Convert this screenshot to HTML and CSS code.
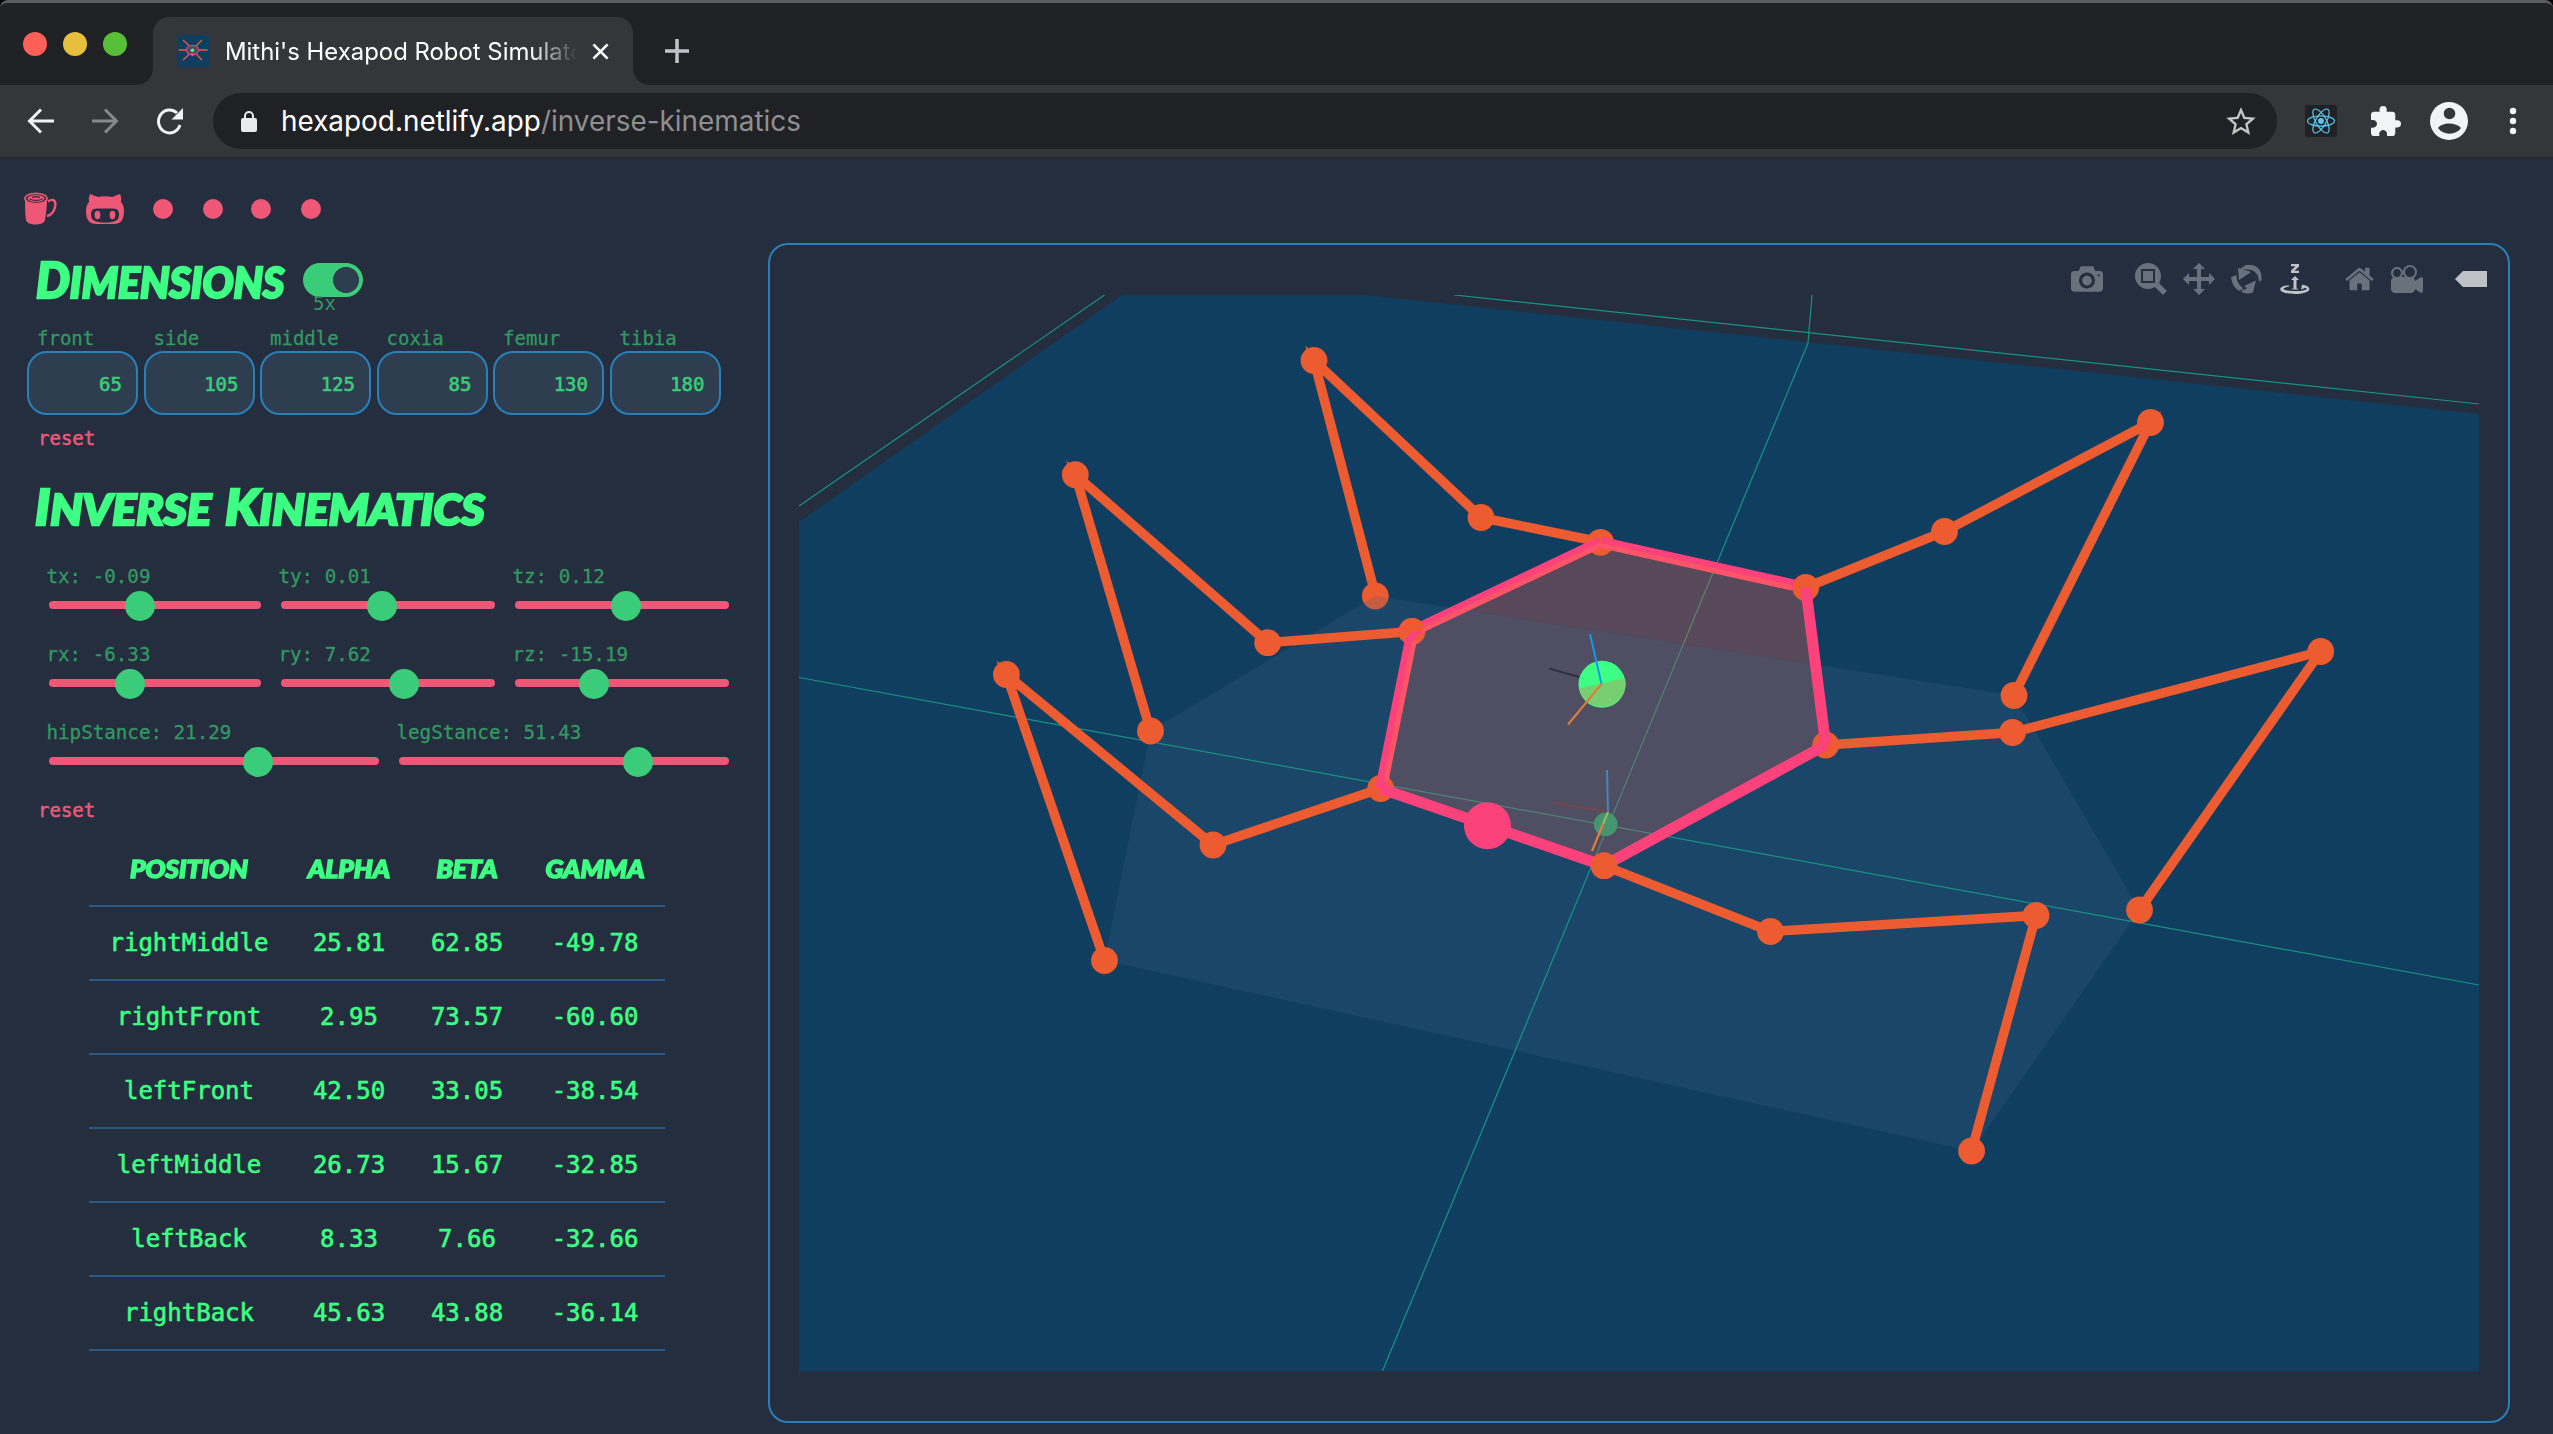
FILE: index.html
```html
<!DOCTYPE html>
<html lang="en">
<head>
<meta charset="utf-8">
<title>Mithi's Hexapod Robot Simulator</title>
<link rel="stylesheet" href="styles.css">
</head>
<body>
<header class="tabstrip">
  <div class="lights"><i class="red"></i><i class="yellow"></i><i class="green"></i></div>
  <div class="tab">
    <svg class="favicon" viewBox="0 0 32 32"><rect width="32" height="32" fill="#0f3e61"/><path d="M6 5l6 5.500M25 5l-5.500 5.500M1.500 15H9M22 15h8.500M6 25l6-5.500M25 25l-5.500-5.500" fill="none" stroke="#ed5b30" stroke-width="1.300"/><path d="M11.500 10.500h8l2.500 4.500-2.500 4.300h-8L9 15z" fill="#4f4d60" stroke="#e0447b" stroke-width="1.200"/><circle cx="15.400" cy="15.300" r="1.700" fill="#3dff83"/><circle cx="15.400" cy="19.600" r="1.600" fill="#fc427b"/></svg>
    <span class="tab-title">Mithi's Hexapod Robot Simulato</span>
    <svg class="close" viewBox="0 0 18 18"><path d="M1.500 1.500l15 15M16.500 1.500l-15 15"/></svg>
  </div>
  <svg class="plus" viewBox="0 0 24 24"><path d="M12 0v24M0 12h24"/></svg>
</header>
<nav class="toolbar">
  <svg class="nav" viewBox="0 0 26 26"><path d="M26 13H2M13 1.500L1.500 13 13 24.500"/></svg>
  <svg class="nav dim" viewBox="0 0 26 26"><path d="M0 13h24M13 1.500L24.500 13 13 24.500"/></svg>
  <svg class="nav" viewBox="0 0 26 26"><path d="M23.500 17A11 11.500 0 1 1 20.500 5"/><path class="solid" d="M26.500 0v11.500H15z"/></svg>
  <div class="urlbar">
    <svg class="lock" viewBox="0 0 16 21"><rect y="7" width="16" height="14" rx="2" fill="#e8eaed"/><path d="M4 8V5a4 4 0 0 1 8 0v3" fill="none" stroke="#e8eaed" stroke-width="2"/></svg>
    <span class="url">hexapod.netlify.app<span class="path">/inverse-kinematics</span></span>
    <svg class="star" viewBox="2 2 20 19"><path fill="#c4c4c5" d="M22 9.240l-7.190-.62L12 2 9.190 8.630 2 9.240l5.460 4.730L5.820 21 12 17.270 18.180 21l-1.630-7.030L22 9.240zM12 15.400l-3.760 2.270 1-4.280-3.320-2.880 4.380-.38L12 6.100l1.710 4.040 4.380.38-3.320 2.880 1 4.280L12 15.400z"/></svg>
  </div>
  <svg class="react" viewBox="0 0 32 32"><rect width="32" height="32" rx="2" fill="#202124"/><g fill="none" stroke="#5ac8f0" stroke-width="1.200"><ellipse cx="16" cy="16" rx="13.500" ry="5.200"/><ellipse cx="16" cy="16" rx="13.500" ry="5.200" transform="rotate(60 16 16)"/><ellipse cx="16" cy="16" rx="13.500" ry="5.200" transform="rotate(120 16 16)"/></g><circle cx="16" cy="16" r="2.900" fill="#5ac8f0"/></svg>
  <svg class="puzzle" viewBox="2 1 21 21"><path fill="#f1f3f4" d="M20.500 11H19V7c0-1.100-.9-2-2-2h-4V3.500a2.500 2.500 0 0 0-5 0V5H4c-1.100 0-1.990.9-1.990 2v3.800H3.500c1.490 0 2.700 1.210 2.700 2.700s-1.210 2.700-2.700 2.700H2V20c0 1.100.9 2 2 2h3.800v-1.500c0-1.490 1.210-2.700 2.700-2.700s2.700 1.210 2.700 2.700V22H17c1.100 0 2-.9 2-2v-4h1.500a2.500 2.500 0 0 0 0-5z"/></svg>
  <svg class="account" viewBox="0 0 38 38"><circle cx="19" cy="19" r="19" fill="#f1f3f4"/><circle cx="19.500" cy="11.500" r="5.800" fill="#35363a"/><path d="M8 26c4-6 18-6 23 0-5 7.500-18 7.500-23 0z" fill="#35363a"/></svg>
  <svg class="dots" viewBox="0 0 8 28"><circle cx="4" cy="4" r="3.200"/><circle cx="4" cy="14" r="3.200"/><circle cx="4" cy="24" r="3.200"/></svg>
</nav>
<main class="page">
  <section class="sidebar">
    <div class="links">
      <svg class="mug" viewBox="0 0 34 34"><path d="M1 7c0 8 0 15 1 21 1 6 18 6 19 0 1-6 2-13 2-21-2 5-20 5-22 0z" fill="#ef5777"/><ellipse cx="12" cy="6.500" rx="11" ry="5.200" fill="#242e3e" stroke="#ef5777" stroke-width="1.700"/><ellipse cx="12" cy="6.500" rx="8.500" ry="3.400" fill="#ef5777"/><path d="M5.500 6.500c2 2.500 11 2.500 13 0M8 5.500c2-1.200 6-1.200 8 0" fill="none" stroke="#242e3e" stroke-width="1.200"/><path d="M24 9.500c4-3 8-2 7.300 4-1 7-4 9.500-8.300 10.500" fill="none" stroke="#ef5777" stroke-width="2.400"/></svg>
      <svg class="cat" viewBox="0 0 38 30"><path d="M4 0l8 3q7-1.500 14 0l8-3q2 4 1 8 3 3 3 9 0 13-10 13H10Q0 30 0 17q0-6 3-9-1-4 1-8z" fill="#ef5777"/><path d="M11 14.500h16c5 0 6 3 6 6 0 6-4 8-14 8s-14-2-14-8c0-3 1-6 6-6z" fill="#242e3e"/><ellipse cx="11.500" cy="21" rx="2.900" ry="4.200" fill="#ef5777"/><ellipse cx="26.500" cy="21" rx="2.900" ry="4.200" fill="#ef5777"/></svg>
      <i></i><i></i><i></i><i></i>
    </div>
    <div class="titlerow">
      <h2 class="t-dim"><span class="cap">D</span>imensions</h2>
      <div class="switch"><div class="toggle"></div><span class="mult">5x</span></div>
    </div>
    <div class="dims">
      <label>front<b>65</b></label><label>side<b>105</b></label><label>middle<b>125</b></label><label>coxia<b>85</b></label><label>femur<b>130</b></label><label>tibia<b>180</b></label>
    </div>
    <div class="reset r1">reset</div>
    <h2 class="t-ik"><span class="cap">I</span>nverse <span class="cap">K</span>inematics</h2>
    <div class="sliders three">
      <div class="slider">tx: -0.09<div class="track"><i style="left:91px"></i></div></div>
      <div class="slider">ty: 0.01<div class="track"><i style="left:101px"></i></div></div>
      <div class="slider">tz: 0.12<div class="track"><i style="left:111px"></i></div></div>
      <div class="slider">rx: -6.33<div class="track"><i style="left:81px"></i></div></div>
      <div class="slider">ry: 7.62<div class="track"><i style="left:123px"></i></div></div>
      <div class="slider">rz: -15.19<div class="track"><i style="left:79px"></i></div></div>
    </div>
    <div class="sliders two">
      <div class="slider">hipStance: 21.29<div class="track"><i style="left:209px"></i></div></div>
      <div class="slider">legStance: 51.43<div class="track"><i style="left:239px"></i></div></div>
    </div>
    <div class="reset r2">reset</div>
    <div class="table">
      <div class="tr th"><span>position</span><span>alpha</span><span>beta</span><span>gamma</span></div>
      <div class="tr"><span>rightMiddle</span><span>25.81</span><span>62.85</span><span>-49.78</span></div>
      <div class="tr"><span>rightFront</span><span>2.95</span><span>73.57</span><span>-60.60</span></div>
      <div class="tr"><span>leftFront</span><span>42.50</span><span>33.05</span><span>-38.54</span></div>
      <div class="tr"><span>leftMiddle</span><span>26.73</span><span>15.67</span><span>-32.85</span></div>
      <div class="tr"><span>leftBack</span><span>8.33</span><span>7.66</span><span>-32.66</span></div>
      <div class="tr"><span>rightBack</span><span>45.63</span><span>43.88</span><span>-36.14</span></div>
    </div>
  </section>
  <section class="plot">
    <div class="modebar">
      <svg class="gap1" viewBox="0 0 1000 1000"><path transform="matrix(1 0 0 -1 0 850)" d="m500 450c-83 0-150-67-150-150 0-83 67-150 150-150 83 0 150 67 150 150 0 83-67 150-150 150z m400 150h-120c-16 0-34 13-39 29l-31 93c-6 15-23 28-40 28h-340c-16 0-34-13-39-28l-31-94c-6-15-23-28-40-28h-120c-55 0-100-45-100-100v-450c0-55 45-100 100-100h800c55 0 100 45 100 100v450c0 55-45 100-100 100z m-400-550c-138 0-250 112-250 250 0 138 112 250 250 250 138 0 250-112 250-250 0-138-112-250-250-250z m365 380c-19 0-35 16-35 35 0 19 16 35 35 35 19 0 35-16 35-35 0-19-16-35-35-35z"/></svg>
      <svg viewBox="0 0 1000 1000"><path transform="matrix(1 0 0 -1 0 850)" d="m1000-25l-250 251c40 63 63 138 63 218 0 224-182 406-407 406-224 0-406-182-406-406s183-406 407-406c80 0 155 22 218 62l250-250 125 125z m-812 250l0 438 437 0 0-438-437 0z m62 375l313 0 0-312-313 0 0 312z"/></svg>
      <svg viewBox="0 0 1000 1000"><path transform="matrix(1 0 0 -1 0 850)" d="m1000 350l-187 188 0-125-250 0 0 250 125 0-188 187-187-187 125 0 0-250-250 0 0 125-188-188 186-187 0 125 252 0 0-250-125 0 187-188 188 188-125 0 0 250 250 0 0-126 187 188z"/></svg>
      <svg viewBox="0 0 32 32"><path d="M7 5L19 8.500 19.500 9.500 8 17zM9 6C15 1 23 1 27 5c3 3 4 7 3.500 12l-2.500 2C28 13 25 7 17 6.500zM13 2.500C21 0 26 4 28 8 24 4 19 3.500 15 6zM0 14l5.500-2C5.500 18 8 22 12 25l-1 4C4 27 1 21 0 14zM25 17.500L13 23l3 2c-3 3-7 2-8 1 3 5 9 5.500 14 3.500z"/></svg>
      <svg class="on gap2" viewBox="0 0 32 32"><path d="M11 1h8v2.500l-4.600 4.300H19V10h-8V7.500l4.500-4.200H11zM15 13l4 4h-2.500v8.500c2 .2 2 1 2 1h-7s0-.8 2-1V17H11zM9 23.500c-8 1-8 4.500 6 4.500s14-3.500 7-4.300l1-2c10 2 9 9-8 9.300-18 0-19-8-6-8.800zM22 21.500l4 3-5 2z"/></svg>
      <svg class="gap3" viewBox="0 0 928.6 1000"><path transform="matrix(1 0 0 -1 0 850)" d="m786 296v-267q0-15-11-26t-25-10h-214v214h-143v-214h-214q-15 0-25 10t-11 26v267q0 1 0 2t0 2l321 264 321-264q1-1 1-4z m124 39l-34-41q-5-5-12-6h-2q-7 0-12 3l-386 322-386-322q-7-4-13-4-7 2-12 7l-35 41q-4 5-3 13t6 12l401 334q18 15 42 15t43-15l136-114v109q0 8 5 13t13 5h107q8 0 13-5t5-13v-227l122-102q5-5 6-12t-4-13z"/></svg>
      <svg class="gap4" viewBox="0 0 1000 1000"><path transform="matrix(1 0 0 -1 0 850)" d="m938 413l-188-125c0 37-17 71-44 94 64 38 107 107 107 187 0 121-98 219-219 219-121 0-219-98-219-219 0-61 25-117 66-156h-115c30 33 49 76 49 125 0 103-84 187-187 187s-188-84-188-187c0-57 26-107 65-141-38-22-65-62-65-109v-250c0-70 56-126 125-126h500c69 0 125 56 125 126l188-126c34 0 62 28 62 63v375c0 35-28 63-62 63z m-750 0c-69 0-125 56-125 125s56 125 125 125 125-56 125-125-56-125-125-125z m406-1c-87 0-157 70-157 157 0 86 70 156 157 156s156-70 156-156-70-157-156-157z"/></svg>
      <svg class="on" viewBox="0 0 32 32"><path d="M0 16l8-8h24v16H8z"/></svg>
    </div>
    <svg class="scene" viewBox="799 295 1680 1076">
      <path d="M799 522L1122 295H1365L2479 414V1371H799z" fill="#0f3e61"/>
      <circle cx="1375.300" cy="596" r="13.400" fill="#ed5b30"/>
      <path d="M1375.300 596L2014 695.500 2139.500 910 1971.600 1151 1104.500 960.500 1150.500 731z" fill="#3f6584" fill-opacity=".23"/>
      <g fill="none" stroke="#199284" stroke-width="1.200"><path d="M799 506L1104.500 295M1454 295L2479 404M1812 295L1808 343 1382.500 1371M799 677.500L2479 985"/></g>
      <path d="M1459.100 609.100L1600.500 542 1805.700 587.500 1815.500 664.600z" fill="#ff6348" fill-opacity=".3"/>
      <path d="M1459.100 609.100L1815.500 664.600 1825.700 745 1604 865.700 1380.700 788.500 1412 631.500z" fill="#ce6252" fill-opacity=".3"/>
      <g fill="none" stroke="#ed5b30" stroke-width="9.500">
        <path d="M1600.500 542L1481 517.500 1314 360.500 1373 586"/>
        <path d="M1412 631.500L1267.700 642.700 1075.300 474.700 1150.500 731"/>
        <path d="M1380.700 788.500L1213 845 1006.400 674.500 1104.500 960.500"/>
        <path d="M1805.700 587.500L1944.500 531.500 2150.500 422.500 2014 695.500"/>
        <path d="M1825.700 745L2012.500 732.500 2320.700 651.500 2139.500 910"/>
        <path d="M1604 865.700L1770.500 931.500 2036 915.500 1971.600 1151"/>
      </g>
      <g fill="#ed5b30">
        <circle cx="1481" cy="517.500" r="13.400"/><circle cx="1314" cy="360.500" r="13.400"/>
        <circle cx="1267.700" cy="642.700" r="13.400"/><circle cx="1075.300" cy="474.700" r="13.400"/><circle cx="1150.500" cy="731" r="13.400"/>
        <circle cx="1213" cy="845" r="13.400"/><circle cx="1006.400" cy="674.500" r="13.400"/><circle cx="1104.500" cy="960.500" r="13.400"/>
        <circle cx="1944.500" cy="531.500" r="13.400"/><circle cx="2150.500" cy="422.500" r="13.400"/><circle cx="2014" cy="695.500" r="13.400"/>
        <circle cx="2012.500" cy="732.500" r="13.400"/><circle cx="2320.700" cy="651.500" r="13.400"/><circle cx="2139.500" cy="910" r="13.400"/>
        <circle cx="1770.500" cy="931.500" r="13.400"/><circle cx="2036" cy="915.500" r="13.400"/><circle cx="1971.600" cy="1151" r="13.400"/>
        <circle cx="1600.500" cy="542.300" r="13.400"/><circle cx="1412" cy="631.500" r="13.400"/><circle cx="1380.700" cy="788.500" r="13.400"/><circle cx="1805.700" cy="587.500" r="13.400"/><circle cx="1825.700" cy="745" r="13.400"/>
      </g>
      <g fill="none" stroke="#fc427b" stroke-width="11"><path d="M1412 631.500L1600.500 542M1600.500 542L1805.700 587.500M1805.700 587.500L1825.700 745M1825.700 745L1604 865.700M1604 865.700L1380.700 788.500M1380.700 788.500L1412 631.500"/></g>
      <g fill="none" stroke="#fd5468" stroke-width="5"><path d="M1421 630.500L1600.500 545.500 1792 588M1386 781L1414.500 640"/></g>
      <g fill="#ed5b30"><circle cx="1604" cy="865.700" r="13.400"/><path d="M1399 628a13.400 13.400 0 0 1 24 -4l1 6-12 1.500-5 5-7 3zM1792.500 587a13.400 13.400 0 0 1 26 -2l-4 2-14 1-1 10a13.400 13.400 0 0 1-7-11z"/></g>
      <circle cx="1487.500" cy="825.700" r="23.500" fill="#fc427b"/>
      <circle cx="1602" cy="684.300" r="23.500" fill="#3dff83"/><path d="M1579 688.500L1625 678A23.500 23.500 0 0 1 1579 688.500z" fill="#78cf72"/>
      <circle cx="1605.700" cy="824.300" r="11.800" fill="#459670"/>
      <g fill="none" stroke-width="2"><path d="M1590 634L1601.500 684" stroke="#1599ec"/><path d="M1601.500 684L1568 724.500" stroke="#e37c34"/><path d="M1549 668.500L1579 677" stroke="#333140"/><path d="M1607 770L1608 812" stroke="#4a83b5"/><path d="M1554 803L1608 812" stroke="#75464c"/><path d="M1608 812L1603 824" stroke="#9dbb5a"/><path d="M1603 824L1592 851" stroke="#ee7d36"/></g>
    </svg>
  </section>
</main>
</body>
</html>
```
FILE: styles.css
```css
* { box-sizing: border-box; }
body { margin: 0; width: 2553px; height: 1434px; overflow: hidden; background: #242e3e; font-family: "DejaVu Sans Mono", monospace; display: flex; flex-direction: column; }
svg { display: block; flex: none; }
.tabstrip { height: 85px; flex: none; background: #202124; border-top: 3px solid #5c5c5f; border-radius: 8px 8px 0 0; box-shadow: 0 -10px 0 10px #000; display: flex; align-items: flex-start; padding-left: 23px; }
.lights { display: flex; gap: 16px; padding-top: 29px; width: 130px; }
.lights i { width: 24px; height: 24px; border-radius: 50%; }
.red { background: #ff5f57; }
.yellow { background: #e6c03c; }
.green { background: #58c038; }
.tab { position: relative; margin-top: 14px; width: 480px; height: 68px; background: #35363a; border-radius: 16px 16px 0 0; display: flex; align-items: center; padding: 0 23px 0 24px; }
.tab::before, .tab::after { content: ""; position: absolute; bottom: 0; width: 16px; height: 16px; }
.tab::before { left: -16px; background: radial-gradient(circle at 0 0, #202124 15.500px, #35363a 16px); }
.tab::after { right: -16px; background: radial-gradient(circle at 100% 0, #202124 15.500px, #35363a 16px); }
.favicon { width: 32px; height: 32px; }
.tab-title { margin-left: 16px; width: 366px; white-space: nowrap; font: 23.900px Inter, sans-serif; color: #fff; -webkit-mask-image: linear-gradient(90deg, #000 305px, transparent 352px); mask-image: linear-gradient(90deg, #000 305px, transparent 352px); }
.close { width: 17px; height: 17px; margin-left: 1px; }
.close path { stroke: #fff; stroke-width: 2.800; }
.plus { width: 24px; height: 24px; margin: 36px 0 0 32px; }
.plus path { stroke: #c0c3c7; stroke-width: 3.500; }
.toolbar { height: 74px; flex: none; background: #35363a; border-bottom: 2px solid #28292b; display: flex; align-items: center; padding-left: 28px; position: relative; }
.nav { width: 26px; height: 26px; margin-right: 38px; fill: none; stroke: #f1f3f4; stroke-width: 3; overflow: visible; }
.nav .solid { fill: #f1f3f4; stroke: none; }
.nav.dim { stroke: #87888a; }
.nav:nth-child(3) { width: 27px; margin-right: 30px; }
.urlbar { width: 2064px; height: 56px; background: #202124; border-radius: 28px; display: flex; align-items: center; padding: 0 21px 0 28px; }
.lock { width: 16px; height: 21px; }
.url { margin-left: 24px; font: 27.900px Inter, sans-serif; color: #fff; flex: 1; white-space: nowrap; }
.path { color: #8e8f91; }
.star { width: 30px; height: 28px; }
.react { width: 32px; height: 32px; margin-left: 28px; }
.puzzle { width: 30px; height: 30px; margin-left: 34px; }
.account { width: 38px; height: 38px; margin-left: 29px; }
.dots { width: 8px; height: 28px; margin-left: 41px; fill: #f1f3f4; }
.page { flex: 1; display: flex; }
.sidebar { width: 768px; flex: none; padding-top: 30px; }
.links { height: 40px; display: flex; align-items: center; padding-left: 24px; }
.links i { width: 20px; height: 20px; border-radius: 50%; background: #ef5777; margin-left: 29px; }
.links i + i { margin-left: 30px; }
.links i:nth-of-type(3) { margin-left: 28px; }
.mug { width: 34px; height: 34px; }
.cat { width: 38px; height: 30px; margin-left: 28px; }
h2 { margin: 0; color: #3dff83; font: italic 900 42px/50px Lato, sans-serif; text-transform: uppercase; white-space: nowrap; -webkit-text-stroke: 2.500px #3dff83; transform-origin: 0 0; }
.cap { font-size: 49px; }
.titlerow { height: 93px; display: flex; padding: 25px 0 0 36px; }
.t-dim { width: 267px; transform: scaleX(.975); }
.switch { padding-top: 9px; width: 60px; }
.toggle { width: 60px; height: 34px; border-radius: 17px; background: radial-gradient(circle at 43px 17px, #2f3d50 12.700px, #3acc78 13.300px); }
.mult { display: block; margin: -5px 0 0 10px; color: #339862; font-size: 19px; line-height: 22px; }
.dims { display: flex; padding-left: 27px; height: 94px; }
.dims label { width: 116.500px; padding: 3px 0 0 10px; font-size: 19px; line-height: 26px; color: #339862; -webkit-text-stroke: .3px; }
.dims b { display: block; font-weight: 400; margin: 0 0 0 -10px; width: 111px; height: 64px; border: 2px solid #2980b9; border-radius: 20px; background: #2f3d50; color: #3acc78; text-align: right; line-height: 62px; padding-right: 14px; -webkit-text-stroke: .6px; }
.reset { color: #ef5777; font-size: 19px; line-height: 24px; padding-left: 38px; -webkit-text-stroke: .5px; }
.r1 { padding-top: 10px; height: 64px; }
.t-ik { margin-left: 35px; padding-top: 1px; width: 400px; height: 80px; transform: scaleX(1.072); }
.t-ik .cap + .cap { margin-left: 4px; }
.sliders { display: grid; column-gap: 20px; padding-left: 49px; width: 729px; }
.three { grid-template-columns: 212px 214px 214px; }
.two { grid-template-columns: 1fr 1fr; }
.slider { height: 78px; padding-top: 5px; color: #339862; font-size: 19.200px; line-height: 24px; text-indent: -2.500px; -webkit-text-stroke: .3px; }
.track { position: relative; height: 8px; margin-top: 12px; border-radius: 4px; background: #ef5777; }
.track i { position: absolute; top: -10px; width: 30px; height: 30px; margin-left: -15px; border-radius: 50%; background: #3acc78; }
.r2 { padding-top: 4px; height: 39px; }
.table { width: 576px; margin-left: 89px; }
.tr { display: grid; grid-template-columns: 200px 120px 116px 140px; height: 74px; border-bottom: 2px solid #2a5a80; color: #3dff83; font-size: 24px; line-height: 73px; text-align: center; -webkit-text-stroke: .6px; }
.th { font: italic 900 24px/71px Lato, sans-serif; text-transform: uppercase; -webkit-text-stroke: 1.500px #3dff83; }
.th span { transform: scaleX(1.1); }
.plot { width: 1742px; height: 1180px; margin-top: 84px; border: 2px solid #2980b9; border-radius: 20px; padding: 18px 0 0 29px; }
.modebar { display: flex; height: 32px; padding-left: 1272px; fill: #69717d; }
.modebar svg { width: 32px; height: 32px; margin-right: 16px; }
.modebar svg:nth-child(4) { margin-right: 17px; }
.modebar .gap1 { margin-right: 32px; }
.modebar .gap2 { margin-right: 33px; }
.modebar .gap3 { width: 29px; margin-right: 17px; }
.modebar .gap4 { margin-right: 32px; }
.modebar .on { fill: #bfc3c8; }
.scene { width: 1680px; height: 1076px; }
```
